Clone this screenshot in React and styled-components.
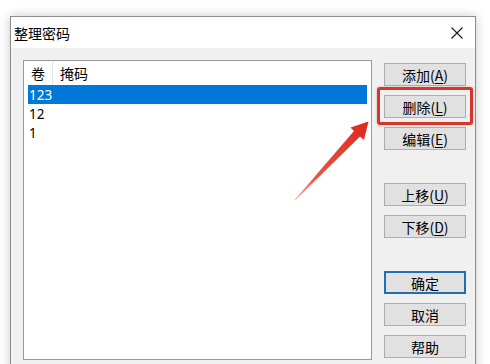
import styled, { createGlobalStyle } from "styled-components";

const GlobalStyle = createGlobalStyle`
  html, body {
    margin: 0;
    padding: 0;
    background: #ffffff;
    overflow: hidden;
  }
  * {
    box-sizing: border-box;
  }
`;

const rows = ["123", "12", "1"];

export default function App() {
  return (
    <Page>
      <GlobalStyle />
      <Window>
        <TitleBar>
          <Title>整理密码</Title>
          <CloseButton aria-label="关闭">
            <svg width="12" height="12" viewBox="0 0 12 12">
              <path d="M0.5 0.5 L11.5 11.5 M11.5 0.5 L0.5 11.5" stroke="#1a1a1a" strokeWidth="1.1" fill="none" />
            </svg>
          </CloseButton>
        </TitleBar>

        <Body>
          <ListBox>
            <Header>
              <HeaderCell $width={25}>卷</HeaderCell>
              <HeaderCell>掩码</HeaderCell>
            </Header>
            {rows.map((r, i) => (
              <Row key={r} $selected={i === 0}>
                {r}
              </Row>
            ))}
          </ListBox>

          <ButtonColumn>
            <Button>
              添加(<u>A</u>)
            </Button>
            <Highlighted>
              <Button>
                删除(<u>L</u>)
              </Button>
              <RedBox />
            </Highlighted>
            <Button>
              编辑(<u>E</u>)
            </Button>

            <Button $groupStart>
              上移(<u>U</u>)
            </Button>
            <Button>
              下移(<u>D</u>)
            </Button>

            <Button $groupStart $default>
              确定
            </Button>
            <Button>取消</Button>
            <Button>帮助</Button>
          </ButtonColumn>
        </Body>
      </Window>

      <Arrow width="490" height="364" viewBox="0 0 490 364">
        <defs>
          <linearGradient id="arrowFill" x1="295" y1="200" x2="368" y2="122" gradientUnits="userSpaceOnUse">
            <stop offset="0" stopColor="#f0b0a6" />
            <stop offset="0.3" stopColor="#e85443" />
            <stop offset="1" stopColor="#e0261c" />
          </linearGradient>
        </defs>
        <polygon
          points="295.3,200.3 360,136.5 364,140 368.5,121.5 350.5,127.5 354,131 294.7,199.7"
          fill="url(#arrowFill)"
        />
      </Arrow>
    </Page>
  );
}

const Page = styled.div`
  position: relative;
  width: 490px;
  height: 364px;
  padding: 16px 0 0 10px;
  overflow: hidden;
  font-family: "Noto Sans", "Noto Sans CJK SC", sans-serif;
`;

const Window = styled.div`
  width: 466px;
  height: 360px;
  border: 1px solid #8c8c8c;
  background: #f0f0f0;
  box-shadow: 0 0 10px rgba(0, 0, 0, 0.22);
  display: flex;
  flex-direction: column;
`;

const TitleBar = styled.div`
  height: 31px;
  background: #ffffff;
  display: flex;
  align-items: center;
  justify-content: space-between;
  padding: 0 12px 0 3px;
`;

const Title = styled.span`
  font-family: "Noto Sans CJK SC", sans-serif;
  font-size: 14px;
  color: #000000;
`;

const CloseButton = styled.div`
  width: 12px;
  height: 12px;
  display: flex;
  margin-top: 1px;
`;

const Body = styled.div`
  flex: 1;
  display: flex;
  padding: 12px 9px 0 12px;
`;

const ListBox = styled.div`
  width: 349px;
  height: 300px;
  background: #ffffff;
  border: 1px solid #9a9a9a;
  padding: 0 3px 0 4px;
`;

const Header = styled.div`
  height: 24px;
  display: flex;
  align-items: stretch;
`;

const HeaderCell = styled.div`
  width: ${(p) => (p.$width ? `${p.$width}px` : "auto")};
  flex: ${(p) => (p.$width ? "none" : "1")};
  display: flex;
  align-items: center;
  padding-left: ${(p) => (p.$width ? "3px" : "7px")};
  border-right: ${(p) => (p.$width ? "1px solid #e5e5e5" : "none")};
  font-family: "Noto Sans CJK SC", sans-serif;
  font-size: 14px;
  color: #000000;
`;

const Row = styled.div`
  height: 19px;
  display: flex;
  align-items: center;
  padding-left: 1px;
  margin-right: 1px;
  font-size: 13.5px;
  color: ${(p) => (p.$selected ? "#ffffff" : "#000000")};
  background: ${(p) => (p.$selected ? "#0078d7" : "transparent")};
`;

const ButtonColumn = styled.div`
  margin-left: 12px;
  width: 82px;
  padding-top: 3px;
  display: flex;
  flex-direction: column;
  gap: 9px;
`;

const Button = styled.div`
  height: 23px;
  display: flex;
  align-items: center;
  justify-content: center;
  background: #e1e1e1;
  border: ${(p) => (p.$default ? "2px solid #1f6fb2" : "1px solid #adadad")};
  margin-top: ${(p) => (p.$groupStart ? "24px" : "0")};
  font-family: "Noto Sans CJK SC", sans-serif;
  font-size: 14px;
  color: #000000;

  u {
    text-decoration-thickness: 1px;
    text-underline-offset: 2px;
  }
`;

const Highlighted = styled.div`
  position: relative;
`;

const RedBox = styled.div`
  position: absolute;
  left: -7px;
  right: -7px;
  top: -8px;
  bottom: -7px;
  border: 3px solid #d6352b;
  border-radius: 3px;
  box-shadow: 0 0 2px rgba(180, 40, 30, 0.4);
  pointer-events: none;
`;

const Arrow = styled.svg`
  position: absolute;
  left: 0;
  top: 0;
  pointer-events: none;
`;
